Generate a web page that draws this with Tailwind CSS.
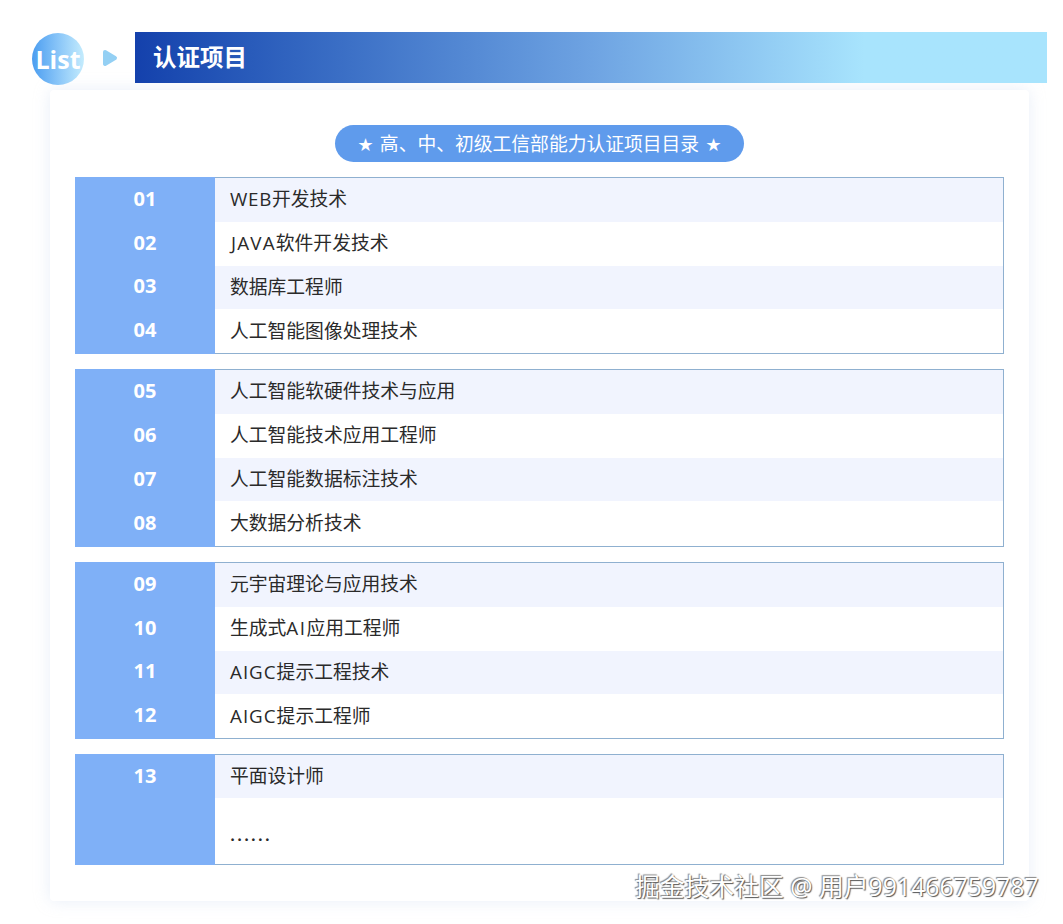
<!DOCTYPE html>
<html lang="zh-CN">
<head>
    <meta charset="UTF-8">
    <title>认证项目</title>
    <script src="https://cdn.jsdelivr.net/npm/@tailwindcss/browser@4"></script>
</head>
<body class="bg-white h-[924px] overflow-hidden relative [font-family:'Open_Sans','Noto_Sans_CJK_SC',sans-serif]">
    <!-- Header -->
    <header class="flex items-start h-[51px] mt-8">
        <div class="w-[52px] h-[52px] ml-8 mt-px pt-[2px] rounded-full bg-gradient-to-r from-[#4a9df0] to-[#c4ecfd] flex items-center justify-center text-white text-[25px] font-bold">List</div>
        <svg class="ml-[18px] mt-[17px]" width="16" height="18" viewBox="0 0 16 18"><path d="M3 3 L13 9 L3 15 Z" fill="#94d0f4" stroke="#94d0f4" stroke-width="4" stroke-linejoin="round"/></svg>
        <div class="ml-[17px] flex-1 mr-4 h-[51px] flex items-center pl-[18px] pt-[1px] bg-gradient-to-r from-[#1441ac] via-[#6ea3e2] via-50% to-[#a8e4fd] to-80% text-white text-[23.500px] font-bold">认证项目</div>
    </header>

    <!-- Card -->
    <main class="ml-[50px] w-[979px] h-[811px] mt-[7px] bg-white rounded shadow-[0_0_16px_rgba(190,205,235,0.35)] pt-[35px] px-[25px]">
        <div class="w-[409px] h-[37px] ml-[260px] pt-[2px] rounded-full bg-[#5f9bec] flex items-center justify-center gap-[7px] text-white text-[18.800px]">
            <span class="text-[14.500px]">★</span>
            <span>高、中、初级工信部能力认证项目目录</span>
            <span class="text-[14.500px]">★</span>
        </div>

        <div class="mt-[15px] flex flex-col gap-[15px] text-[18.800px] text-[#2a2a2a]">
            <section class="flex h-[177px]">
                <div class="w-[140px] bg-[#7fb0f7] flex flex-col text-white font-bold text-[20px] text-center">
                    <div class="flex-1 flex items-center justify-center">01</div>
                    <div class="flex-1 flex items-center justify-center">02</div>
                    <div class="flex-1 flex items-center justify-center">03</div>
                    <div class="flex-1 flex items-center justify-center pb-[2px]">04</div>
                </div>
                <div class="flex-1 flex flex-col border-y border-r border-[#8fb0d0]">
                    <div class="flex-1 flex items-center pl-[15px] pb-[1px] bg-[#f1f4fe]"><span class="tracking-[0.700px]">WEB</span>开发技术</div>
                    <div class="flex-1 flex items-center pl-[15px] pb-[1px]"><span class="tracking-[1.200px] pl-px">JAVA</span>软件开发技术</div>
                    <div class="flex-1 flex items-center pl-[15px] pb-[1px] bg-[#f1f4fe]">数据库工程师</div>
                    <div class="flex-1 flex items-center pl-[15px] pb-[1px]">人工智能图像处理技术</div>
                </div>
            </section>

            <section class="flex h-[178px]">
                <div class="w-[140px] bg-[#7fb0f7] flex flex-col text-white font-bold text-[20px] text-center">
                    <div class="flex-1 flex items-center justify-center">05</div>
                    <div class="flex-1 flex items-center justify-center">06</div>
                    <div class="flex-1 flex items-center justify-center">07</div>
                    <div class="flex-1 flex items-center justify-center pb-[2px]">08</div>
                </div>
                <div class="flex-1 flex flex-col border-y border-r border-[#8fb0d0]">
                    <div class="flex-1 flex items-center pl-[15px] pb-[1px] bg-[#f1f4fe]">人工智能软硬件技术与应用</div>
                    <div class="flex-1 flex items-center pl-[15px] pb-[1px]">人工智能技术应用工程师</div>
                    <div class="flex-1 flex items-center pl-[15px] pb-[1px] bg-[#f1f4fe]">人工智能数据标注技术</div>
                    <div class="flex-1 flex items-center pl-[15px] pb-[2px]">大数据分析技术</div>
                </div>
            </section>

            <section class="flex h-[177px]">
                <div class="w-[140px] bg-[#7fb0f7] flex flex-col text-white font-bold text-[20px] text-center">
                    <div class="flex-1 flex items-center justify-center">09</div>
                    <div class="flex-1 flex items-center justify-center">10</div>
                    <div class="flex-1 flex items-center justify-center">11</div>
                    <div class="flex-1 flex items-center justify-center pb-[2px]">12</div>
                </div>
                <div class="flex-1 flex flex-col border-y border-r border-[#8fb0d0]">
                    <div class="flex-1 flex items-center pl-[15px] pb-[1px] bg-[#f1f4fe]">元宇宙理论与应用技术</div>
                    <div class="flex-1 flex items-center pl-[15px] pb-[1px]">生成式<span class="tracking-[1.500px]">AI</span>应用工程师</div>
                    <div class="flex-1 flex items-center pl-[15px] pb-[1px] bg-[#f1f4fe]"><span class="tracking-[1px]">AIGC</span>提示工程技术</div>
                    <div class="flex-1 flex items-center pl-[15px] pb-[1px]"><span class="tracking-[1px]">AIGC</span>提示工程师</div>
                </div>
            </section>

            <section class="flex h-[111px]">
                <div class="w-[140px] bg-[#7fb0f7] flex flex-col text-white font-bold text-[20px] text-center">
                    <div class="h-[43px] flex items-center justify-center">13</div>
                </div>
                <div class="flex-1 flex flex-col border-y border-r border-[#8fb0d0]">
                    <div class="h-[43px] flex items-center pl-[15px] pb-[1px] bg-[#f1f4fe]">平面设计师</div>
                    <div class="flex-1 flex items-center pl-[15px] pt-[6px] tracking-[1.800px] font-semibold">......</div>
                </div>
            </section>
        </div>
    </main>

    <!-- Watermark -->
    <div class="absolute left-[635px] top-[870px] text-[24.800px] leading-[32px] whitespace-nowrap text-white [text-shadow:1px_1px_1px_#555,-1px_-1px_1px_#888]">掘金技术社区 @ 用户991466759787</div>
</body>
</html>
